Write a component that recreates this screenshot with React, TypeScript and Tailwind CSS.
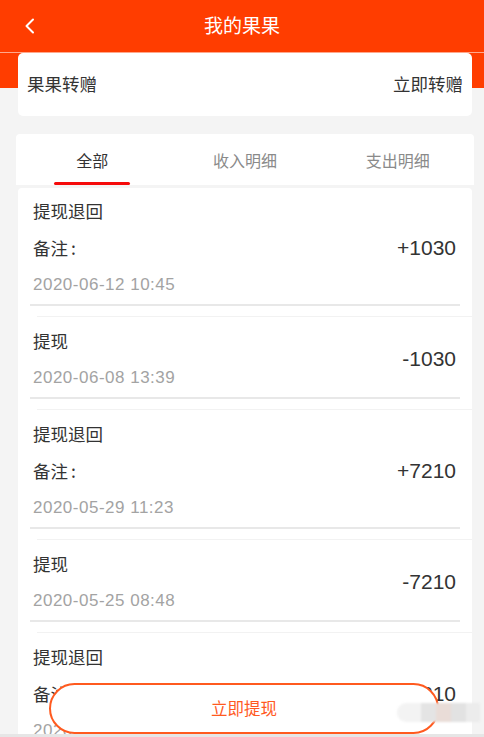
import React from 'react';

const items = [
  { title: '提现退回', remark: true, amount: '+1030', date: '2020-06-12 10:45' },
  { title: '提现', remark: false, amount: '-1030', date: '2020-06-08 13:39' },
  { title: '提现退回', remark: true, amount: '+7210', date: '2020-05-29 11:23' },
  { title: '提现', remark: false, amount: '-7210', date: '2020-05-25 08:48' },
  { title: '提现退回', remark: true, amount: '+7210', date: '2020-05-22 16:35' },
];

export default function App() {
  return (
    <div className="relative h-[737px] w-[484px] overflow-hidden bg-[#f4f4f4] font-['Liberation_Sans','Noto_Sans_CJK_SC',sans-serif]">
      {/* Header */}
      <div className="relative flex h-[52px] items-center justify-center bg-[#ff3d00]">
        <svg className="absolute left-[24px] top-[18px]" width="11" height="16" viewBox="0 0 11 16" fill="none">
          <polyline points="9,1.5 2.5,8 9,14.5" stroke="#ffffff" strokeWidth="2" strokeLinecap="round" strokeLinejoin="round" />
        </svg>
        <span className="-mt-[1px] text-[19px] text-white font-['Noto_Sans_CJK_SC',sans-serif]">我的果果</span>
      </div>
      <div className="h-px bg-[#ffa88c]" />

      {/* Transfer card over orange band */}
      <div className="bg-[linear-gradient(to_bottom,#ff3d00_35px,#f4f4f4_35px)] pl-[18px] pr-[12px]">
        <div className="flex h-[63px] items-center justify-between rounded-[5px] bg-white px-[9px] text-[17.5px] text-[#333] font-['Noto_Sans_CJK_SC',sans-serif]">
          <span>果果转赠</span>
          <span>立即转赠</span>
        </div>
      </div>

      {/* Tabs */}
      <div className="ml-[16px] mr-[10px] mt-[18px] flex h-[51px] rounded-t-[4px] bg-white font-['Noto_Sans_CJK_SC',sans-serif]">
        <div className="relative flex flex-1 items-center justify-center text-[16px] text-[#333]">
          全部
          <div className="absolute bottom-0 left-1/2 h-[3px] w-[76px] -translate-x-1/2 rounded-full bg-[#f50a0a]" />
        </div>
        <div className="flex flex-1 items-center justify-center text-[16px] text-[#8a8a8a]">收入明细</div>
        <div className="flex flex-1 items-center justify-center text-[16px] text-[#8a8a8a]">支出明细</div>
      </div>

      {/* List */}
      <div className="ml-[18px] mr-[12px] mt-[3px] rounded-t-[4px] bg-white">
        {items.map((it, i) => (
          <div key={i}>
            {i > 0 && <div className="ml-[19px] h-px bg-[#f2f2f2]" />}
            <div className={i === 0 ? 'flex items-center justify-between pl-[15px] pr-[16px] pt-[4px]' : 'flex items-center justify-between pl-[15px] pr-[16px] pt-[5px]'}>
              <div className="flex flex-col">
                <div className="h-[37px] leading-[37px] text-[17.5px] text-[#333] font-['Noto_Sans_CJK_SC',sans-serif]">{it.title}</div>
                {it.remark && (
                  <div className="flex h-[37px] leading-[37px] text-[17.5px] text-[#333] font-['Noto_Sans_CJK_SC',sans-serif]">
                    <span>备注</span>
                    <span className="ml-[3px]">:</span>
                  </div>
                )}
                <div className="h-[37px] leading-[37px] text-[17px] tracking-[0.5px] text-[#a3a3a3]">{it.date}</div>
              </div>
              <div className="text-[21px] text-[#333]">{it.amount}</div>
            </div>
            <div className="mx-[12px] mb-[10px] mt-[1px] h-[2px] bg-[#e8e8e8]" />
          </div>
        ))}
      </div>

      {/* Bottom button */}
      <div className="absolute left-[49px] top-[683px] flex h-[51px] w-[390px] items-center justify-center rounded-full border-2 border-[#ff5a1f] bg-white">
        <span className="text-[16.5px] text-[#ff5a1f] font-['Noto_Sans_CJK_SC',sans-serif]">立即提现</span>
      </div>

      {/* Blurred watermark */}
      <div className="absolute left-[397px] top-[703px] flex h-[19px] blur-[1px]">
        <div className="h-full w-[24px] rounded-l-full bg-[#f3f3f3]" />
        <div className="h-full w-[15px] bg-[#e4e4e4]" />
        <div className="h-full w-[15px] bg-[#e9dcd7]" />
        <div className="h-full w-[15px] bg-[#e2e2e2]" />
        <div className="h-full w-[14px] bg-[#ececec]" />
      </div>

      {/* Bottom edge */}
      <div className="absolute bottom-0 left-0 h-[3px] w-full bg-[#e6e6e6]" />
    </div>
  );
}
